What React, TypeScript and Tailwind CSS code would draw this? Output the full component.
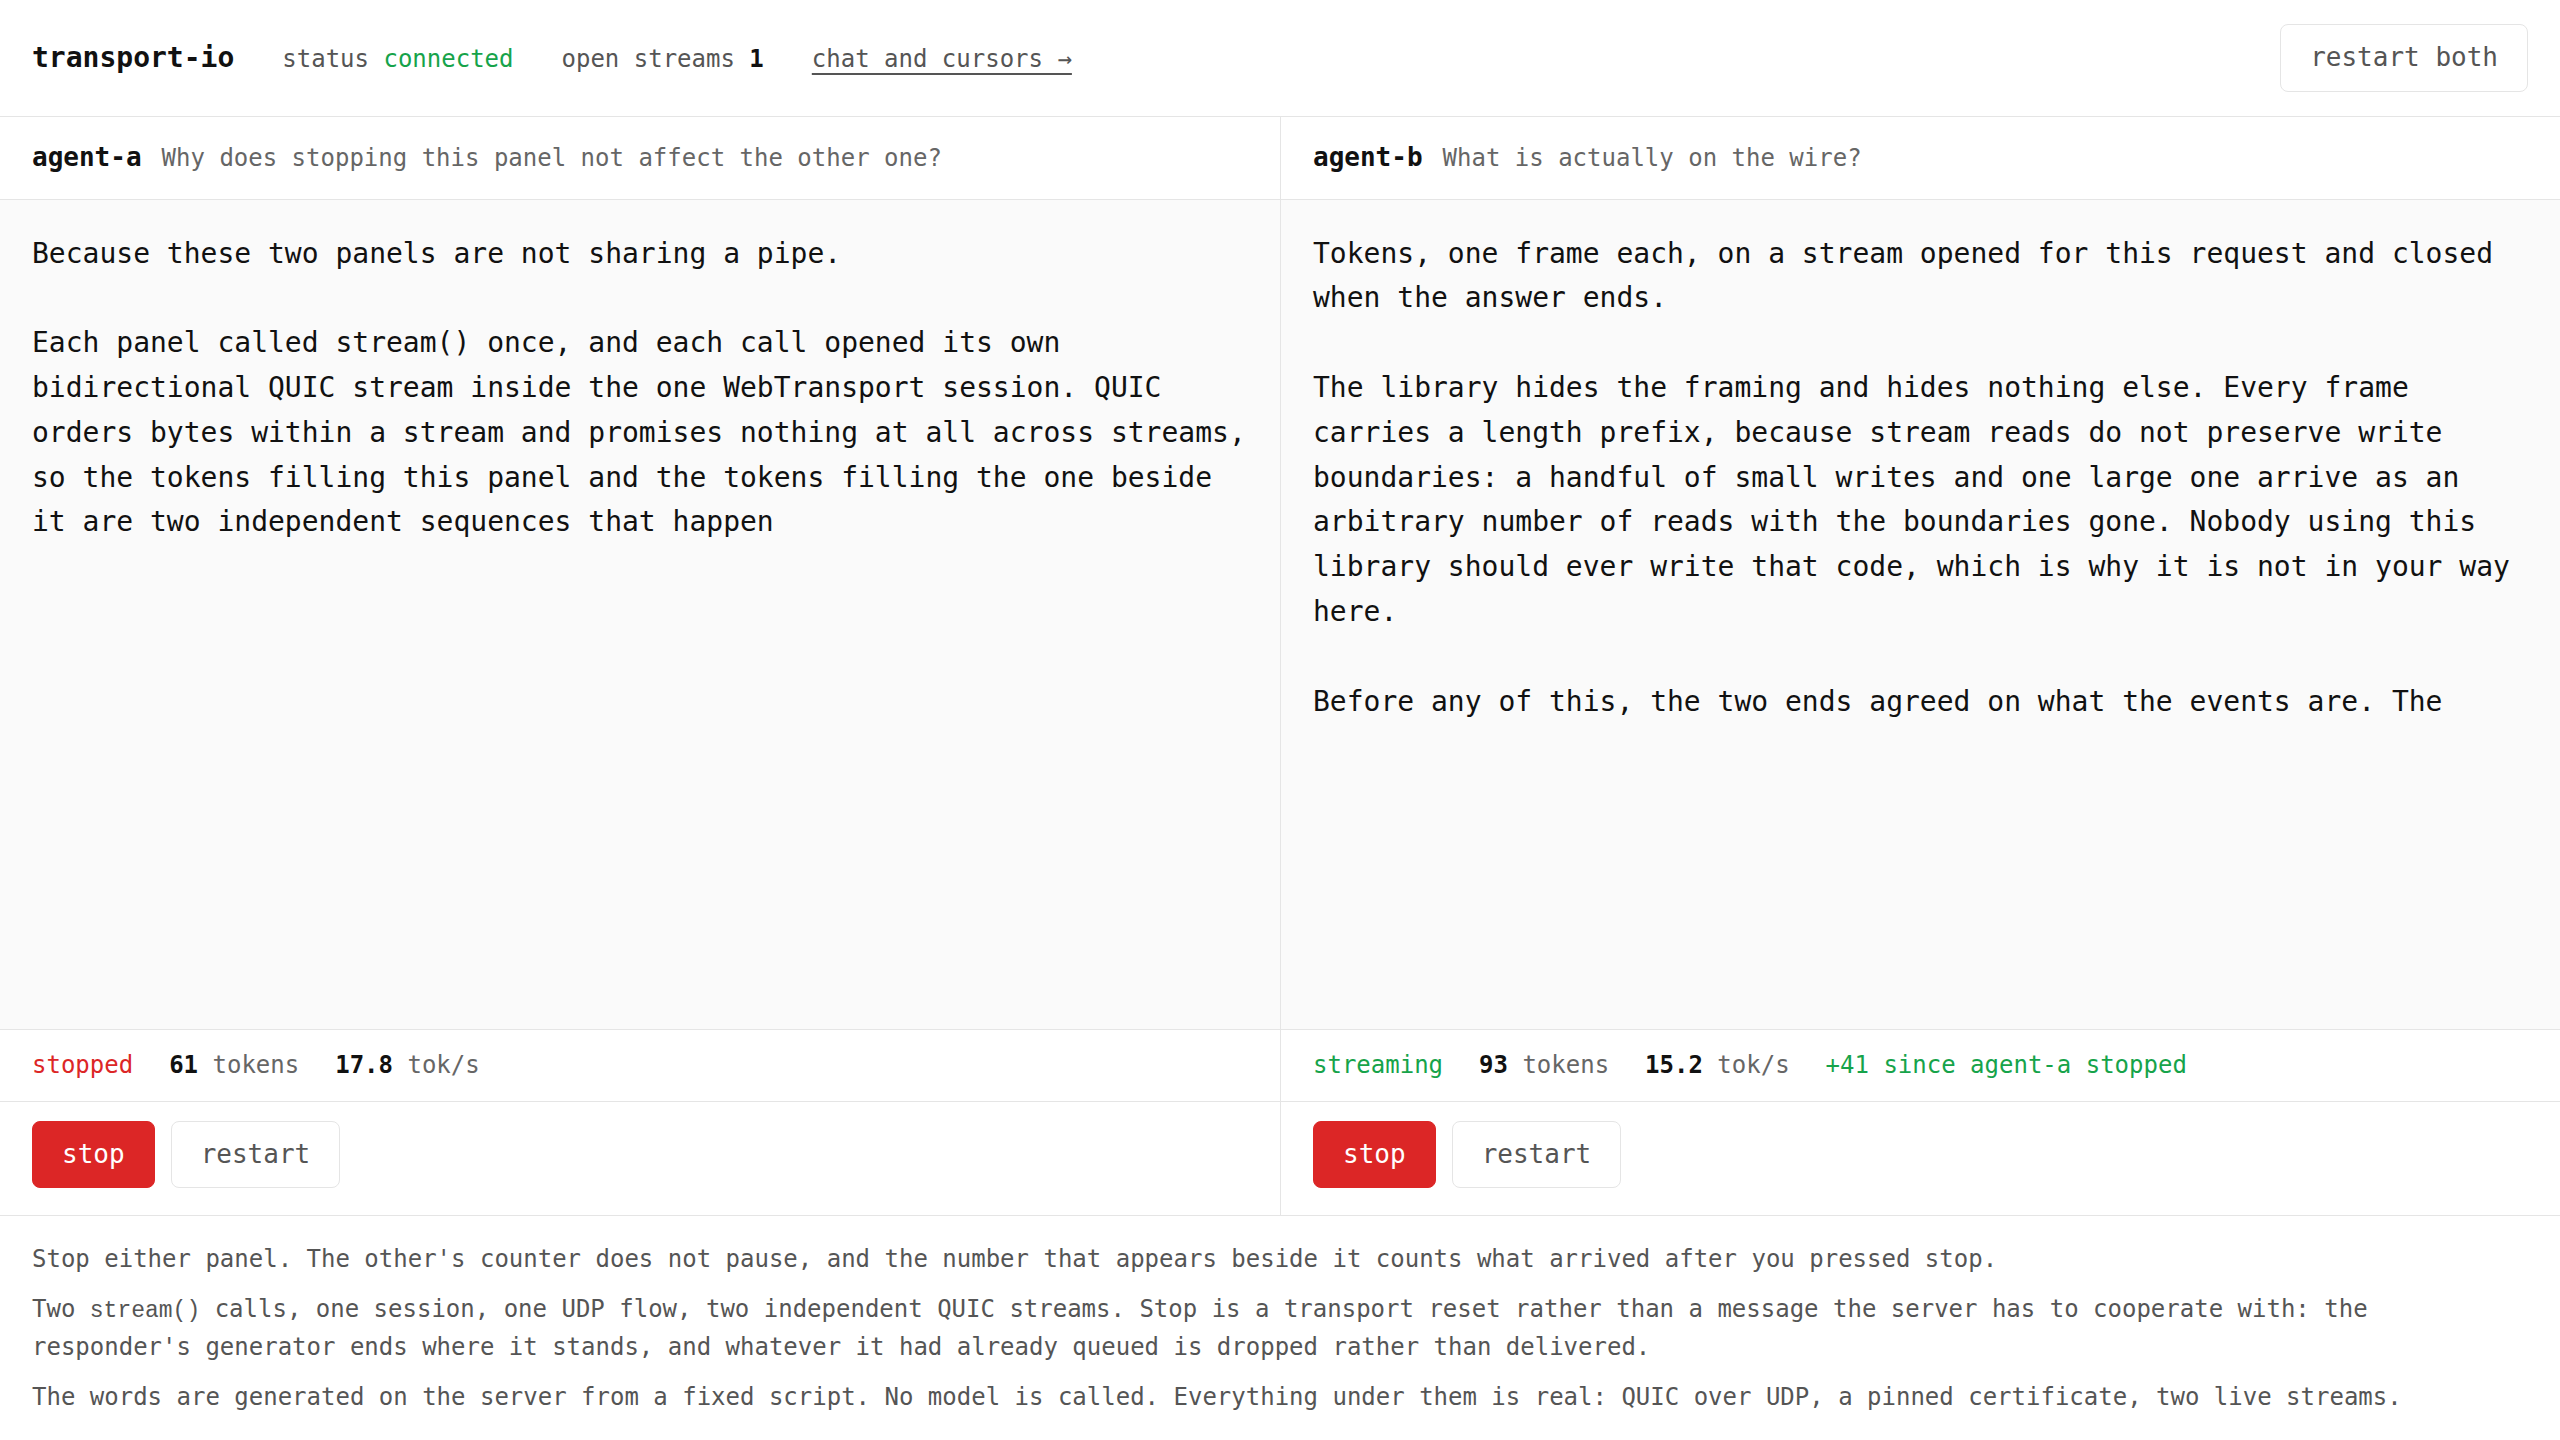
import React from 'react';

type PanelStatus = 'stopped' | 'streaming';

interface PanelData {
  id: string;
  question: string;
  answer: string;
  status: PanelStatus;
  tokens: number;
  rate: string;
  since?: string;
}

const panels: PanelData[] = [
  {
    id: 'agent-a',
    question: 'Why does stopping this panel not affect the other one?',
    answer:
      'Because these two panels are not sharing a pipe.\n\nEach panel called stream() once, and each call opened its own bidirectional QUIC stream inside the one WebTransport session. QUIC orders bytes within a stream and promises nothing at all across streams, so the tokens filling this panel and the tokens filling the one beside it are two independent sequences that happen',
    status: 'stopped',
    tokens: 61,
    rate: '17.8',
  },
  {
    id: 'agent-b',
    question: 'What is actually on the wire?',
    answer:
      'Tokens, one frame each, on a stream opened for this request and closed when the answer ends.\n\nThe library hides the framing and hides nothing else. Every frame carries a length prefix, because stream reads do not preserve write boundaries: a handful of small writes and one large one arrive as an arbitrary number of reads with the boundaries gone. Nobody using this library should ever write that code, which is why it is not in your way here.\n\nBefore any of this, the two ends agreed on what the events are. The',
    status: 'streaming',
    tokens: 93,
    rate: '15.2',
    since: '+41 since agent-a stopped',
  },
];

const Panel: React.FC<{ panel: PanelData; first: boolean }> = ({ panel, first }) => {
  return (
    <section className={`flex flex-col min-h-0 ${first ? '' : 'border-l border-[#e5e5e5]'}`}>
      {/* Question header */}
      <div className="flex items-baseline gap-5 px-8 py-5 bg-white border-b border-[#e5e5e5] leading-[1.6]">
        <span className="text-[26px] font-bold text-[#111]">{panel.id}</span>
        <span className="text-[24px] text-[#666]">{panel.question}</span>
      </div>

      {/* Streamed answer */}
      <div className="flex-1 min-h-0 overflow-hidden bg-[#fafafa] p-8">
        <p className="whitespace-pre-wrap text-[28px] leading-[1.6] text-[#111]">{panel.answer}</p>
      </div>

      {/* Counters */}
      <div className="flex items-center gap-9 px-8 py-4 bg-white border-t border-[#e5e5e5] text-[24px] leading-[1.6]">
        <span className={panel.status === 'stopped' ? 'text-[#dc2626]' : 'text-[#16a34a]'}>
          {panel.status}
        </span>
        <span className="text-[#666]">
          <b className="font-bold text-[#111]">{panel.tokens}</b> tokens
        </span>
        <span className="text-[#666]">
          <b className="font-bold text-[#111]">{panel.rate}</b> tok/s
        </span>
        {panel.since && <span className="text-[#16a34a]">{panel.since}</span>}
      </div>

      {/* Controls */}
      <div className="flex items-center gap-4 px-8 pt-[19px] pb-[27px] bg-white border-t border-[#e5e5e5]">
        <button className="px-[29px] py-3 rounded-lg border border-[#dc2626] bg-[#dc2626] text-white text-[26px] leading-[1.6]">
          stop
        </button>
        <button className="px-[29px] py-3 rounded-lg border border-[#e5e5e5] bg-white text-[#555] text-[26px] leading-[1.6]">
          restart
        </button>
      </div>
    </section>
  );
};

const App: React.FC = () => {
  return (
    <div className="h-screen flex flex-col bg-white font-['DejaVu_Sans_Mono',monospace] text-[#111]">
      {/* Top bar */}
      <header className="flex items-center h-[117px] px-8 border-b border-[#e5e5e5]">
        <div className="flex items-baseline gap-12 text-[24px]">
          <span className="text-[28px] font-bold text-[#111]">transport-io</span>
          <span className="text-[#555]">
            status <span className="text-[#16a34a]">connected</span>
          </span>
          <span className="text-[#555]">
            open streams <b className="font-bold text-[#111]">1</b>
          </span>
          <a className="text-[#555] underline underline-offset-[6px]">chat and cursors →</a>
        </div>
        <button className="ml-auto px-[29px] py-3 rounded-lg border border-[#e5e5e5] bg-white text-[#555] text-[26px] leading-[1.6]">
          restart both
        </button>
      </header>

      {/* Side-by-side streams */}
      <main className="flex-1 min-h-0 grid grid-cols-2 border-b border-[#e5e5e5]">
        {panels.map((p, i) => (
          <Panel key={p.id} panel={p} first={i === 0} />
        ))}
      </main>

      {/* Notes */}
      <footer className="flex flex-col gap-[11px] px-8 pt-6 pb-6 text-[24px] leading-[1.6] text-[#555]">
        <p>
          Stop either panel. The other's counter does not pause, and the number that appears beside it counts what
          arrived after you pressed stop.
        </p>
        <p>
          <span>Two </span>
          <code className="font-['Liberation_Mono',monospace] text-[23px] leading-none">stream()</code>
          <span> calls, one session, one UDP flow, two independent QUIC streams. Stop is a transport reset rather than a
          message the server has to cooperate with: the responder's generator ends where it stands, and whatever it
          had already queued is dropped rather than delivered.</span>
        </p>
        <p>
          The words are generated on the server from a fixed script. No model is called. Everything under them is real:
          QUIC over UDP, a pinned certificate, two live streams.
        </p>
      </footer>
    </div>
  );
};

export default App;
